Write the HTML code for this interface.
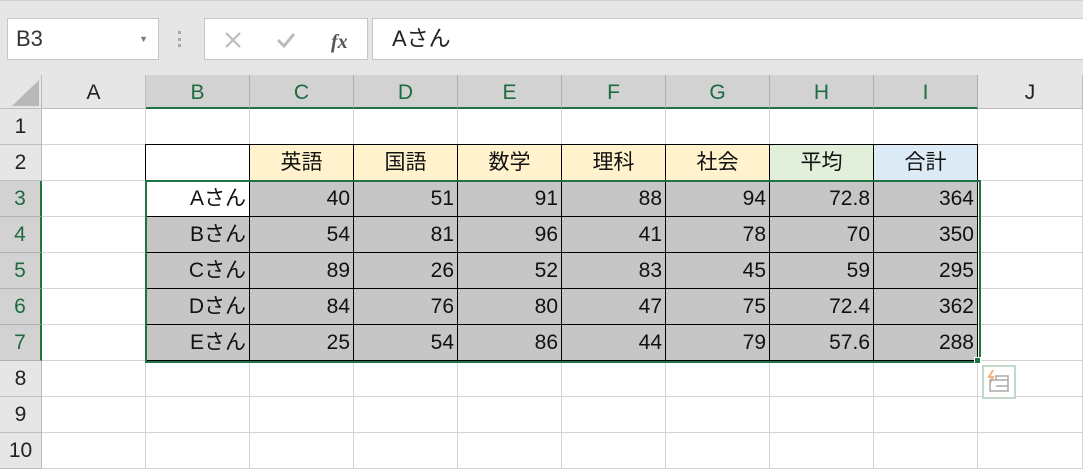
<!DOCTYPE html><html><head><meta charset="utf-8"><style>
*{box-sizing:border-box;margin:0;padding:0}
body{width:1083px;height:470px;overflow:hidden;background:#fff;font-family:"Liberation Sans","Noto Sans CJK JP",sans-serif;position:relative}
.top{position:absolute;left:0;top:0;width:1083px;height:75px;background:#e6e6e6;border-top:1px solid #d0d0d0}
.box{position:absolute;background:#fff;border:1px solid #c6c6c6}
.g{position:absolute;left:0;top:75px;display:grid;grid-template-columns:42px repeat(9,104px) 105px;grid-template-rows:34px repeat(10,36px)}
.g div{border-right:1px solid #d4d4d4;border-bottom:1px solid #d4d4d4;font-size:21px;line-height:35px;padding:0 3px;text-align:right;color:#111;white-space:nowrap}
.g .h{background:#e6e6e6;text-align:center;color:#222;border-color:#bdbdbd}
.g .hs{background:#d2d2d2;color:#1d6b3f;text-align:center;border-color:#b0b0b0}
.g .hsb{border-bottom:2px solid #217346}
.g .rs{border-right:2px solid #217346}
.s{background:#c6c6c6}
.t{border:1px solid #000 !important;margin:-1px 0 0 -1px}
</style></head><body>
<div class="top">
 <div class="box" style="left:7px;top:17px;width:152px;height:42px;font-size:22px;line-height:40px;padding-left:8px;color:#333">B3<span style="position:absolute;right:10px;top:0;font-size:9px;color:#777">▼</span></div>
 <div style="position:absolute;left:178px;top:30px;width:4px;height:16px;border-left:3px dotted #aaa"></div>
 <div class="box" style="left:204px;top:17px;width:164px;height:42px">
  <svg width="164" height="42" style="position:absolute;left:0;top:0"><path d="M21 14l14 14M35 14l-14 14" stroke="#bbb" stroke-width="2.2" fill="none"/><path d="M73 21l6 6 10-12" stroke="#bbb" stroke-width="3" fill="none"/><text x="126" y="29" font-family="Liberation Serif" font-style="italic" font-weight="bold" font-size="20" fill="#555">fx</text></svg>
 </div>
 <div class="box" style="left:372px;top:17px;width:720px;height:42px;font-size:22px;line-height:40px;padding-left:19px;color:#222">Aさん</div>
</div>
<div class="g">
<div class="h" style="position:relative"><svg width="42" height="35" style="position:absolute;left:0;top:0"><path d="M12 31L39 31L39 5Z" fill="#b8b8b8"/></svg></div><div class="h">A</div><div class="hs hsb">B</div><div class="hs hsb">C</div><div class="hs hsb">D</div><div class="hs hsb">E</div><div class="hs hsb">F</div><div class="hs hsb">G</div><div class="hs hsb">H</div><div class="hs hsb">I</div><div class="h">J</div>
<div class="h">1</div><div></div><div></div><div></div><div></div><div></div><div></div><div></div><div></div><div></div><div></div>
<div class="h">2</div><div></div><div class="t"></div><div class="t" style="background:#fff2cc;text-align:center">英語</div><div class="t" style="background:#fff2cc;text-align:center">国語</div><div class="t" style="background:#fff2cc;text-align:center">数学</div><div class="t" style="background:#fff2cc;text-align:center">理科</div><div class="t" style="background:#fff2cc;text-align:center">社会</div><div class="t" style="background:#e2efda;text-align:center">平均</div><div class="t" style="background:#ddebf7;text-align:center">合計</div><div></div>
<div class="hs rs">3</div><div></div><div class="t">Aさん</div><div class="t s">40</div><div class="t s">51</div><div class="t s">91</div><div class="t s">88</div><div class="t s">94</div><div class="t s">72.8</div><div class="t s">364</div><div></div>
<div class="hs rs">4</div><div></div><div class="t s">Bさん</div><div class="t s">54</div><div class="t s">81</div><div class="t s">96</div><div class="t s">41</div><div class="t s">78</div><div class="t s">70</div><div class="t s">350</div><div></div>
<div class="hs rs">5</div><div></div><div class="t s">Cさん</div><div class="t s">89</div><div class="t s">26</div><div class="t s">52</div><div class="t s">83</div><div class="t s">45</div><div class="t s">59</div><div class="t s">295</div><div></div>
<div class="hs rs">6</div><div></div><div class="t s">Dさん</div><div class="t s">84</div><div class="t s">76</div><div class="t s">80</div><div class="t s">47</div><div class="t s">75</div><div class="t s">72.4</div><div class="t s">362</div><div></div>
<div class="hs rs">7</div><div></div><div class="t s">Eさん</div><div class="t s">25</div><div class="t s">54</div><div class="t s">86</div><div class="t s">44</div><div class="t s">79</div><div class="t s">57.6</div><div class="t s">288</div><div></div>
<div class="h">8</div><div></div><div></div><div></div><div></div><div></div><div></div><div></div><div></div><div></div><div></div>
<div class="h">9</div><div></div><div></div><div></div><div></div><div></div><div></div><div></div><div></div><div></div><div></div>
<div class="h">10</div><div></div><div></div><div></div><div></div><div></div><div></div><div></div><div></div><div></div><div></div>
</div>
<div style="position:absolute;left:145px;top:180px;width:836px;height:183px;border:2px solid #217346"></div>
<div style="position:absolute;left:974px;top:357px;width:7px;height:7px;background:#217346;border:1px solid #fff"></div>
<div style="position:absolute;left:982px;top:365px;width:34px;height:34px;border:2px solid #c0d9c9;background:#fff">
<svg width="30" height="30"><path d="M9 3l-4 7h4l-3 6" stroke="#f4b183" stroke-width="2" fill="none"/><path d="M6 13h18v11H6zM12 13v-4h12v4M12 19h12" stroke="#aaa" stroke-width="1.5" fill="none"/></svg></div>
</body></html>
